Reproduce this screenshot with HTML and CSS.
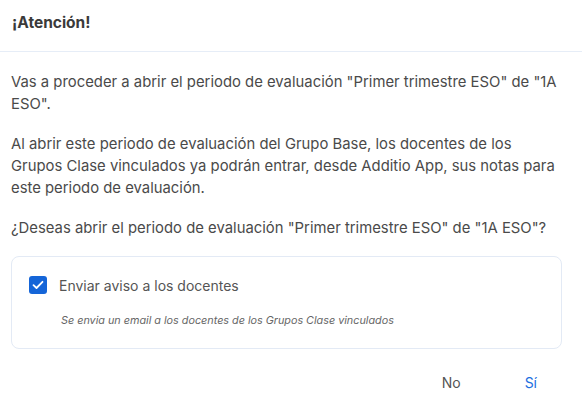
FILE: index.html
```html
<!DOCTYPE html>
<html>
<head>
    <title>Atención</title>
    <link rel="stylesheet" href="styles.css">
</head>
<body>
    <div class="dialog">
        <div class="dialog-header">
            <h2>¡Atención!</h2>
        </div>

        <div class="dialog-body">
            <p>Vas a proceder a abrir el periodo de evaluación "Primer trimestre ESO" de "1A ESO".</p>
            <p>Al abrir este periodo de evaluación del Grupo Base, los docentes de los Grupos Clase vinculados ya podrán entrar, desde Additio App, sus notas para este periodo de evaluación.</p>
            <p>¿Deseas abrir el periodo de evaluación "Primer trimestre ESO" de "1A ESO"?</p>

            <div class="notify-box">
                <label class="check-row">
                    <span class="checkbox">
                        <svg width="12" height="10" viewBox="0 0 12 10">
                            <path d="M1.5 5.2 L4.5 8 L10.5 1.8" fill="none" stroke="#fff" stroke-width="1.8" stroke-linecap="round" stroke-linejoin="round"/>
                        </svg>
                    </span>
                    <span class="check-label">Enviar aviso a los docentes</span>
                </label>
                <p class="hint">Se envia un email a los docentes de los Grupos Clase vinculados</p>
            </div>
        </div>

        <div class="dialog-actions">
            <button class="btn btn-no">No</button>
            <button class="btn btn-yes">Sí</button>
        </div>
    </div>
</body>
</html>
```

FILE: styles.css
```css
body {
    font-family: Inter, "Noto Sans", sans-serif;
    background-color: #fff;
    color: #4a4a4a;
    margin: 0;
    padding: 0;
}
.dialog {
    width: 582px;
}
.dialog-header {
    height: 52px;
    box-sizing: border-box;
    padding: 0 12px;
    display: flex;
    align-items: center;
    border-bottom: 1px solid #e6edf7;
}
.dialog-header h2 {
    margin: 0 0 6px 0;
    font-size: 15.5px;
    font-weight: 700;
    color: #3a3a3a;
}
.dialog-body {
    padding: 19px 19px 0 11px;
}
.dialog-body p {
    margin: 0 0 18px 0;
    font-size: 14.85px;
    line-height: 22px;
}
.notify-box {
    border: 1px solid #e3eaf5;
    border-radius: 8px;
    padding: 19px 17px 20px 17px;
    margin-top: -1px;
    margin-right: 1px;
}
.check-row {
    display: flex;
    align-items: center;
    gap: 12px;
}
.checkbox {
    width: 18px;
    height: 18px;
    border-radius: 3px;
    background-color: #1565d8;
    display: flex;
    align-items: center;
    justify-content: center;
}
.check-label {
    font-size: 14px;
    color: #555;
}
.dialog-body .hint {
    margin: 20px 0 0 32px;
    font-size: 10.8px;
    line-height: 14px;
    font-style: italic;
    color: #666;
}
.dialog-actions {
    display: flex;
    justify-content: flex-end;
    padding: 19px 33px 0 0;
    gap: 40px;
}
.btn {
    background: none;
    border: none;
    font-family: Inter, "Noto Sans", sans-serif;
    font-size: 14px;
    padding: 6px 12px;
    cursor: pointer;
}
.btn-no {
    color: #555;
}
.btn-yes {
    color: #1a6ee0;
}
```
